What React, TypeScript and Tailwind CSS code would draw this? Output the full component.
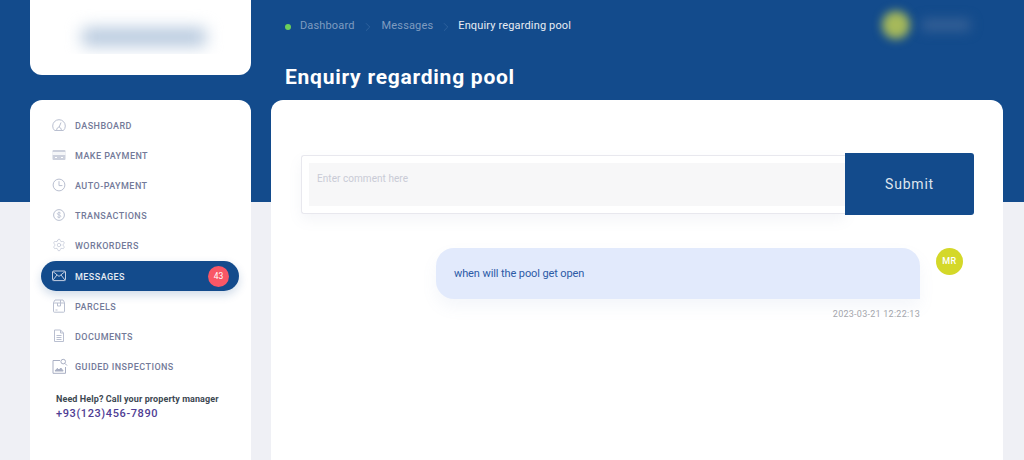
import React from "react";
import { ChevronRight, Settings } from "lucide-react";

const S = "#b9bfd0";

const icons: Record<string, React.ReactNode> = {
  dashboard: (
    <svg width="14" height="14" viewBox="0 0 14 14" fill="none" stroke={S} strokeWidth="1">
      <path d="M2.6 12.5A6.3 6.3 0 1 1 11.4 12.5Z" />
      <path d="M7.2 9 9 4.5M4.6 12.5c0-2 1.2-3.4 2.4-3.4s2.4 1.4 2.4 3.4" />
    </svg>
  ),
  payment: (
    <svg width="14" height="14" viewBox="0 0 14 14" fill="none">
      <rect x="0.5" y="2" width="13" height="10" rx="1" fill="#ccd0dc" />
      <rect x="0.5" y="4" width="13" height="3" fill="#fff" opacity=".8" />
      <path d="M3 9.5h2M9 9.5h2" stroke="#fff" />
    </svg>
  ),
  auto: (
    <svg width="14" height="14" viewBox="0 0 14 14" fill="none" stroke={S} strokeWidth="1">
      <circle cx="7" cy="7" r="5.9" />
      <path d="M7 3.2V7.6H10.4" />
    </svg>
  ),
  transactions: (
    <svg width="14" height="14" viewBox="0 0 14 14" fill="none" stroke={S} strokeWidth="1">
      <circle cx="7" cy="7" r="5.4" />
      <path d="M8.8 5.3C8.3 4.4 5.4 4.2 5.3 5.7 5.2 7.3 8.9 6.6 8.8 8.3 8.7 9.8 5.7 9.6 5.2 8.6M7 3.6v6.8" strokeWidth=".8" />
    </svg>
  ),
  workorders: <Settings size={14} strokeWidth={1.1} color={S} />,
  messages: (
    <svg width="14" height="14" viewBox="0 0 14 14" fill="none" stroke="#c5cfe2" strokeWidth="1">
      <rect x="0.5" y="2" width="13" height="9.6" rx="1" />
      <path d="M1 2.6 7 7.4 13 2.6M1 11 5 6M13 11 9 6" />
    </svg>
  ),
  parcels: (
    <svg width="14" height="14" viewBox="0 0 14 14" fill="none" stroke={S} strokeWidth="1">
      <path d="M1.5 3.5 3 1h8l1.5 2.5V12.5a.7.7 0 0 1-.7.7H2.2a.7.7 0 0 1-.7-.7Z" />
      <path d="M1.5 4h11M8.5 1v6H5.5V4M3.5 11h2" />
    </svg>
  ),
  documents: (
    <svg width="14" height="14" viewBox="0 0 14 14" fill="none" stroke={S} strokeWidth="1">
      <path d="M2.5 1h6l3 3v8.5H2.5Z" />
      <path d="M4.5 6.5h5M4.5 8.5h5M4.5 10.5h5M8.5 1v3h3" />
    </svg>
  ),
  inspect: (
    <svg width="16" height="16" viewBox="0 0 16 16" fill="none" stroke="#a9afc3" strokeWidth="1">
      <path d="M8 2.5H1v12.8h12.5V9" />
      <circle cx="11.2" cy="3.6" r="2.3" />
      <path d="M12.9 5.4 15 7.5" />
      <path d="M3 13l2.3-2.6L7 12l1.8-2 2.4 3Z" fill="#a9afc3" />
    </svg>
  ),
};

const rows = [
  ["dashboard", "Dashboard"],
  ["payment", "Make Payment"],
  ["auto", "Auto-Payment"],
  ["transactions", "Transactions"],
  ["workorders", "Workorders"],
  ["messages", "Messages"],
  ["parcels", "Parcels"],
  ["documents", "Documents"],
  ["inspect", "Guided Inspections"],
];

export default function App() {
  return (
    <div className="relative h-[460px] overflow-hidden bg-[#eff0f5] font-['Roboto',sans-serif]">
      <div className="absolute inset-x-0 top-0 h-[202px] bg-[#134b8c]" />
      <div className="relative flex gap-5 pl-[30px] pr-[21px]">
        <aside className="flex w-[221px] shrink-0 flex-col gap-[25px]">
          <div className="h-[75px] overflow-hidden rounded-b-xl bg-white">
            <div className="h-[54px] overflow-hidden pl-[52px] pt-[28px]">
              <div className="h-[18px] w-[124px] rounded-sm bg-[#b4c7dd] blur-[8px]" />
            </div>
          </div>
          <nav className="h-[400px] rounded-t-xl bg-white pl-[11px] pr-[12px] pt-[10px]">
            {rows.map(([key, label]) => {
              const active = key === "messages";
              return (
                <div
                  key={key}
                  className={
                    active
                      ? "mt-px flex h-[30px] items-center rounded-full bg-[#134b8c] pl-[11px] pr-[10px] shadow-[0_4px_10px_rgba(19,75,140,0.2)]"
                      : "flex h-[30px] items-center pl-[11px] pr-[10px]"
                  }
                >
                  <span className="flex w-[23px] shrink-0 items-center">{icons[key]}</span>
                  <span
                    className={
                      active
                        ? "pt-[3px] text-[9px] font-medium uppercase tracking-[0.45px] text-[#e6ebf3]"
                        : "pt-[3px] text-[9px] font-medium uppercase tracking-[0.45px] text-[#737a99]"
                    }
                  >
                    {label}
                  </span>
                  {active && (
                    <span className="ml-auto flex h-[21px] w-[21px] items-center justify-center rounded-full bg-[#f95766] text-[8.5px] text-white">
                      43
                    </span>
                  )}
                </div>
              );
            })}
            <div className="pl-[15px] pt-[11px]">
              <p className="text-[9px] font-bold leading-[14px] tracking-[0.1px] text-[#3d4852]">Need Help? Call your property manager</p>
              <p className="pt-px text-[11px] font-medium leading-[14px] tracking-[0.6px] text-[#4f3d94]">+93(123)456-7890</p>
            </div>
          </nav>
        </aside>

        <main className="min-w-0 flex-1">
          <header className="relative h-[100px] pl-[14px]">
            <div className="flex h-[53px] items-center text-[11px] tracking-[0.15px]">
              <span className="mr-[9px] h-[6px] w-[6px] rounded-full bg-[#6ccf5a]" />
              <span className="text-[#7f9cc0]">Dashboard</span>
              <ChevronRight size={14} className="mx-[6.5px] text-[#3f70a8]" strokeWidth={1} />
              <span className="text-[#7f9cc0]">Messages</span>
              <ChevronRight size={14} className="mx-[5.5px] text-[#3f70a8]" strokeWidth={1} />
              <span className="text-[#e8edf4]">Enquiry regarding pool</span>
            </div>
            <h1 className="mt-[9px] text-[21px] font-bold leading-[30px] tracking-[0.75px] text-white">Enquiry regarding pool</h1>
            <div className="absolute left-[611px] top-[11px] flex items-center gap-[12px]">
              <span className="h-[28px] w-[28px] rounded-full bg-[#a6b95a] blur-[5px]" />
              <span className="h-[12px] w-[48px] bg-[#356095] blur-[6px]" />
            </div>
          </header>

          <section className="h-[400px] rounded-t-xl bg-white pl-[30px] pr-[29px] pt-[53px]">
            <div className="flex h-[62px] items-stretch">
              <div className="mb-px mt-[2px] min-w-0 flex-1 rounded-l-[3px] border border-r-0 border-[#e8e8ee] py-[7px] pl-[7px] shadow-[0_6px_14px_rgba(120,130,160,0.08)]">
                <div className="h-full bg-[#f7f7f8] px-2 pt-[9px] text-[10px] leading-[14px] tracking-[0.05px] text-[#c9cbd6]">
                  Enter comment here
                </div>
              </div>
              <button className="w-[129px] shrink-0 rounded-r-[3px] bg-[#134b8c] text-[14px] tracking-[0.8px] text-[#dfe5ee]">
                Submit
              </button>
            </div>

            <div className="mt-[33px] flex items-start pl-[135px]">
              <div className="min-w-0 flex-1">
                <div className="flex h-[51px] items-center rounded-t-[18px] rounded-bl-[18px] bg-[#e2eafc] pl-[18px] pt-px text-[11px] tracking-[-0.1px] text-[#2c5aa6] shadow-[0_8px_16px_rgba(120,140,190,0.08)]">
                  when will the pool get open
                </div>
                <p className="mt-[9px] text-right text-[9px] leading-[12px] tracking-[0.25px] text-[#a3a5ac]">2023-03-21 12:22:13</p>
              </div>
              <span className="ml-[16px] mr-[11px] flex h-[27px] w-[27px] shrink-0 items-center justify-center rounded-full bg-[#d4d829] text-[9px] font-medium tracking-[0.5px] text-white">
                MR
              </span>
            </div>
          </section>
        </main>
      </div>
    </div>
  );
}
